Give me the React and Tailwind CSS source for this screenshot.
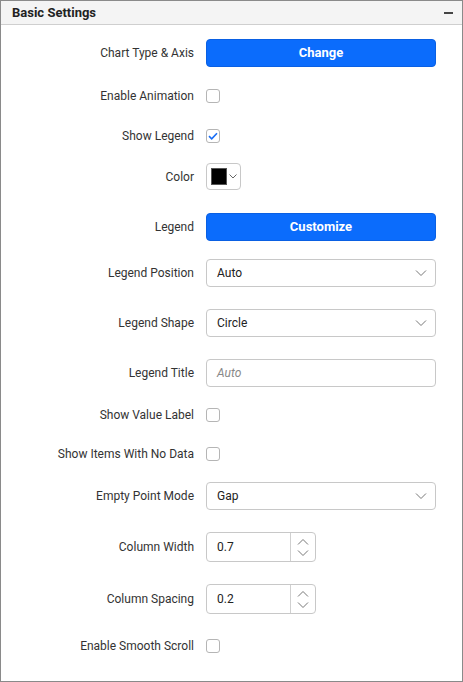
import React from "react";

const Chevron = ({ up = false, className = "" }) => (
  <svg width="12" height="7" viewBox="0 0 12 7" className={className}>
    <path
      d={up ? "M1 6.5 L6 1.5 L11 6.5" : "M1 0.5 L6 5.5 L11 0.5"}
      fill="none"
      stroke="#777"
      strokeWidth="1"
    />
  </svg>
);

const Checkbox = ({ checked }) => (
  <span className="w-[14px] h-[14px] rounded-[3px] border border-[#b5b5b5] bg-white flex items-center justify-center">
    {checked && (
      <svg width="10" height="8" viewBox="0 0 10 8">
        <path d="M1 4.2 L3.7 6.8 L9 1.2" fill="none" stroke="#1a6ef5" strokeWidth="1.6" />
      </svg>
    )}
  </span>
);

const Row = ({ label, mt, h, children }) => (
  <div className={`flex items-center ${mt} ${h}`}>
    <div className="w-[193px] text-right text-[12px] text-[#333] leading-4">{label}</div>
    <div className="ml-[12px] flex items-center">{children}</div>
  </div>
);

const BlueButton = ({ children }) => (
  <button className="w-[230px] h-[28px] rounded-[4px] bg-[#0b6cfc] border border-[#0a60e3] text-white text-[13px] font-bold">
    {children}
  </button>
);

const Select = ({ value }) => (
  <div className="w-[230px] h-[28px] rounded-[4px] border border-[#c8c8c8] bg-white flex items-center pl-[10px] pr-[8px]">
    <span className="flex-1 text-[12px] text-[#222]">{value}</span>
    <Chevron />
  </div>
);

const NumberBox = ({ value }) => (
  <div className="w-[110px] h-[30px] rounded-[4px] border border-[#c8c8c8] bg-white flex">
    <span className="flex-1 flex items-center pl-[10px] text-[12px] text-[#222]">{value}</span>
    <div className="w-[25px] border-l border-[#d0d0d0] flex flex-col items-center justify-center gap-[5px]">
      <Chevron up />
      <Chevron />
    </div>
  </div>
);

export default function App() {
  return (
    <div className="w-[463px] h-[682px] border border-[#8a8a8a] bg-white flex flex-col" style={{ fontFamily: "Roboto, 'Liberation Sans', sans-serif" }}>
      <div className="h-[24px] bg-[#f4f4f4] border-b border-[#cfcfcf] flex items-center pl-[11px] pr-[9px] shrink-0">
        <span className="flex-1 text-[13px] font-bold text-[#222]">Basic Settings</span>
        <span className="w-[9px] h-[2px] bg-[#444]"></span>
      </div>
      <Row label="Chart Type & Axis" mt="mt-[14px]" h="h-[28px]">
        <BlueButton>Change</BlueButton>
      </Row>
      <Row label="Enable Animation" mt="mt-[21px]" h="h-[16px]">
        <Checkbox />
      </Row>
      <Row label="Show Legend" mt="mt-[24px]" h="h-[16px]">
        <Checkbox checked />
      </Row>
      <Row label="Color" mt="mt-[19px]" h="h-[27px]">
        <div className="w-[35px] h-[27px] rounded-[4px] border border-[#c8c8c8] bg-white flex items-center pl-[4px] gap-[2px]">
          <span className="w-[16px] h-[17px] bg-black border border-[#555]"></span>
          <svg width="8" height="5" viewBox="0 0 8 5">
            <path d="M0.5 0.5 L4 4 L7.5 0.5" fill="none" stroke="#666" strokeWidth="1" />
          </svg>
        </div>
      </Row>
      <Row label="Legend" mt="mt-[23px]" h="h-[28px]">
        <BlueButton>Customize</BlueButton>
      </Row>
      <Row label="Legend Position" mt="mt-[18px]" h="h-[28px]">
        <Select value="Auto" />
      </Row>
      <Row label="Legend Shape" mt="mt-[22px]" h="h-[28px]">
        <Select value="Circle" />
      </Row>
      <Row label="Legend Title" mt="mt-[22px]" h="h-[28px]">
        <div className="w-[230px] h-[28px] rounded-[4px] border border-[#c8c8c8] bg-white flex items-center pl-[10px]">
          <span className="text-[12px] italic text-[#888]">Auto</span>
        </div>
      </Row>
      <Row label="Show Value Label" mt="mt-[20px]" h="h-[16px]">
        <Checkbox />
      </Row>
      <Row label="Show Items With No Data" mt="mt-[23px]" h="h-[16px]">
        <Checkbox />
      </Row>
      <Row label="Empty Point Mode" mt="mt-[20px]" h="h-[28px]">
        <Select value="Gap" />
      </Row>
      <Row label="Column Width" mt="mt-[22px]" h="h-[30px]">
        <NumberBox value="0.7" />
      </Row>
      <Row label="Column Spacing" mt="mt-[22px]" h="h-[30px]">
        <NumberBox value="0.2" />
      </Row>
      <Row label="Enable Smooth Scroll" mt="mt-[24px]" h="h-[16px]">
        <Checkbox />
      </Row>
    </div>
  );
}
